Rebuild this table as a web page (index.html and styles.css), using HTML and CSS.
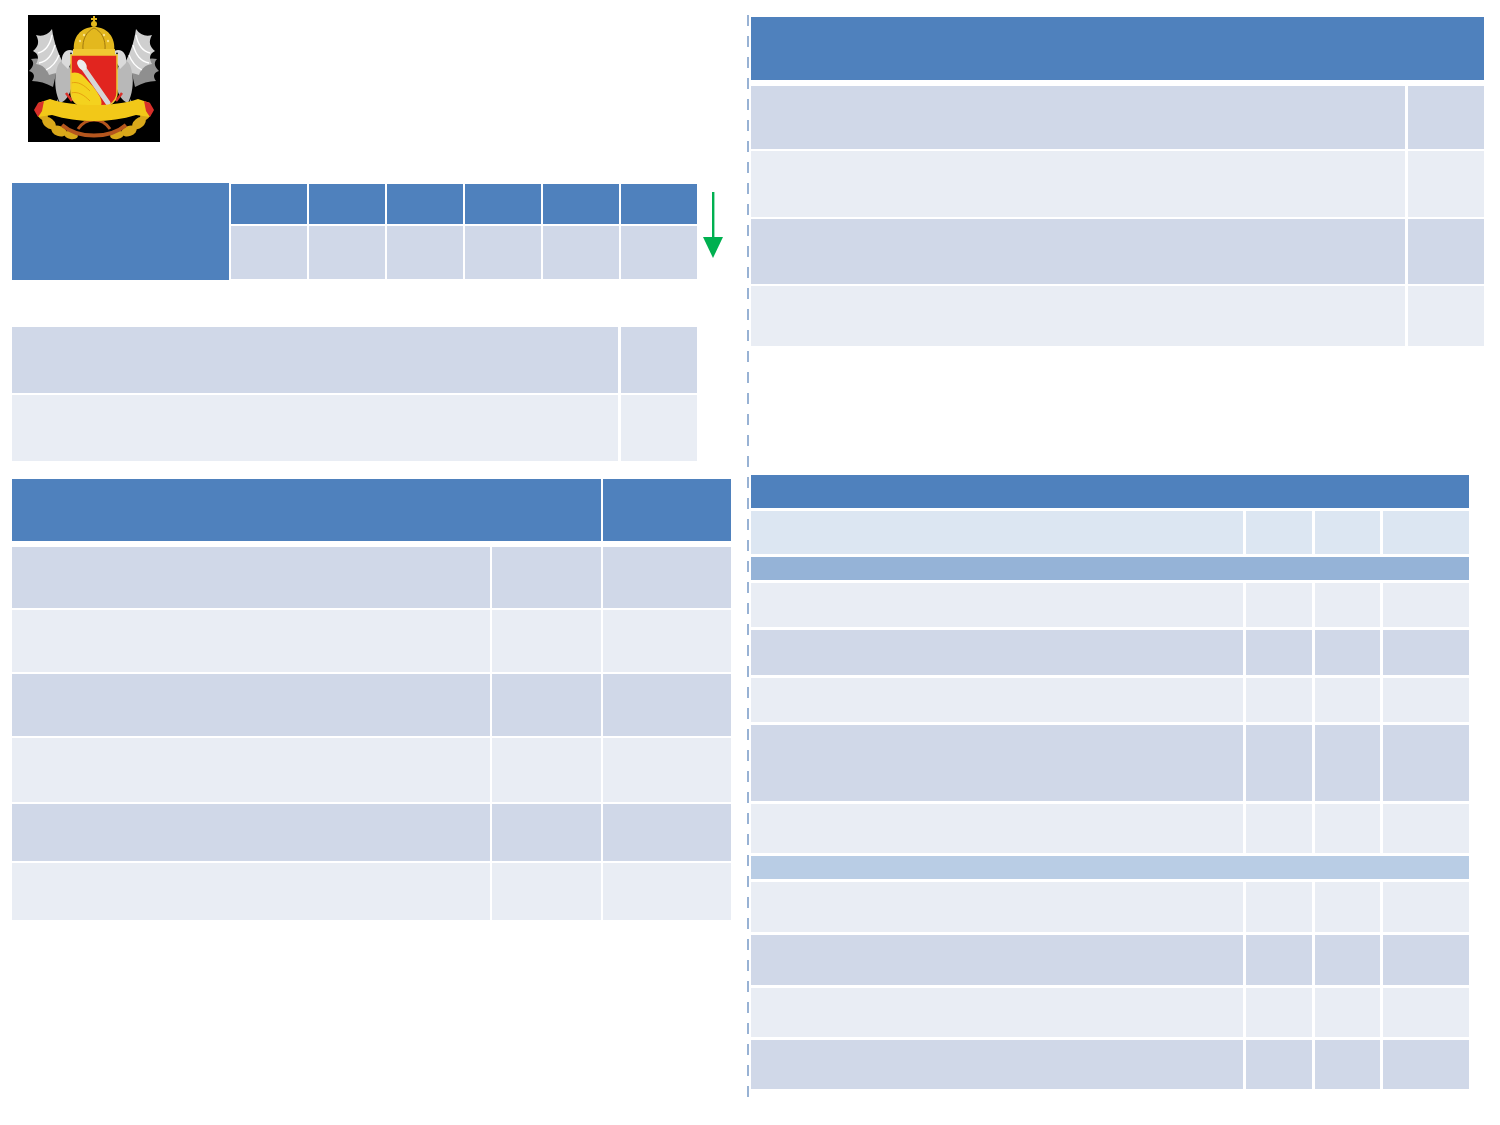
FILE: index.html
```html
<!DOCTYPE html>
<html lang="ru">
<head>
<meta charset="utf-8">
<title>Таблицы</title>
<link rel="stylesheet" href="styles.css">
</head>
<body>
<div class="page">
  <div class="left">
    <div class="emblem">
      <svg viewBox="0 0 132 127" width="132" height="127" aria-label="Герб">
        <rect x="0" y="0" width="132" height="127" fill="#000"/>
        <!-- wreath -->
        <g fill="#d9a81a">
          <ellipse cx="14" cy="98" rx="5" ry="8" transform="rotate(-30 14 98)"/>
          <ellipse cx="21" cy="108" rx="5" ry="8" transform="rotate(-50 21 108)"/>
          <ellipse cx="31" cy="116" rx="5" ry="8" transform="rotate(-70 31 116)"/>
          <ellipse cx="43" cy="120" rx="4" ry="7" transform="rotate(-80 43 120)"/>
          <ellipse cx="118" cy="98" rx="5" ry="8" transform="rotate(30 118 98)"/>
          <ellipse cx="111" cy="108" rx="5" ry="8" transform="rotate(50 111 108)"/>
          <ellipse cx="101" cy="116" rx="5" ry="8" transform="rotate(70 101 116)"/>
          <ellipse cx="89" cy="120" rx="4" ry="7" transform="rotate(80 89 120)"/>
        </g>
        <path d="M34 110 C50 124 82 124 98 110" fill="none" stroke="#b5561e" stroke-width="4"/>
        <path d="M50 114 C58 102 74 102 82 114" fill="none" stroke="#b5561e" stroke-width="3"/>
        <!-- left eagle -->
        <g id="eagle">
          <path d="M30 50 C22 46 12 42 3 44 C7 48 5 52 1 56 C7 58 7 62 4 66 C11 66 18 68 25 72 Z" fill="#8f8f8f"/>
          <path d="M36 50 C30 38 26 28 24 14 C20 20 14 22 8 20 C12 27 10 32 5 36 C11 39 11 44 8 49 C15 50 19 54 21 60 C27 58 32 57 36 58 Z" fill="#cfcfcf"/>
          <path d="M24 20 C22 30 18 36 10 38 M27 30 C24 40 20 46 11 48 M31 40 C28 48 24 52 18 55" fill="none" stroke="#ffffff" stroke-width="1.3"/>
          <path d="M34 46 C42 48 46 58 44 70 C42 80 38 86 32 88 C28 80 26 68 28 58 C29 51 31 47 34 46 Z" fill="#b8b8b8"/>
          <path d="M34 48 C33 41 36 35 42 35 C46 35 48 38 47 40 L51 41 L46 43 C44 46 42 50 40 54 Z" fill="#dadada"/>
          <circle cx="43" cy="38.5" r="1" fill="#222"/>
          <path d="M30 84 C26 90 22 94 17 97 L31 96 Z" fill="#9a9a9a"/>
          <path d="M38 78 L44 86" stroke="#d8302a" stroke-width="2.5"/>
        </g>
        <use href="#eagle" transform="translate(132 0) scale(-1 1)"/>
        <!-- crown -->
        <path d="M46 37 C44 22 53 12 66 12 C79 12 88 22 86 37 Z" fill="#e3b81e"/>
        <path d="M55 35 C54 24 59 16 66 13 C73 16 78 24 77 35" fill="none" stroke="#a27a10" stroke-width="1"/>
        <g fill="#f7e08a">
          <circle cx="52" cy="26" r="1.2"/><circle cx="56" cy="20" r="1.2"/><circle cx="80" cy="26" r="1.2"/><circle cx="76" cy="20" r="1.2"/>
        </g>
        <rect x="45" y="34" width="42" height="6" fill="#f0c832"/>
        <circle cx="66" cy="9" r="3" fill="#e3b81e"/>
        <rect x="65" y="1" width="2" height="6" fill="#e3b81e"/>
        <rect x="63" y="3" width="6" height="2" fill="#e3b81e"/>
        <!-- shield -->
        <path d="M43 40 H89 V78 C89 88 78 93 66 97 C54 93 43 88 43 78 Z" fill="#e1251f"/>
        <path d="M43 58 C50 56 55 60 58 64 C62 68 68 74 72 82 C74 86 74 90 72 93 C70 95 68 96 66 97 C54 93 43 88 43 78 Z" fill="#f4d21e"/>
        <path d="M43 68 C50 66 56 70 62 76 M43 78 C50 76 56 80 62 86" fill="none" stroke="#e8a010" stroke-width="1"/>
        <path d="M52 48 L80 88" stroke="#d6d6d6" stroke-width="5" stroke-linecap="round"/>
        <ellipse cx="54" cy="50" rx="6" ry="4" transform="rotate(55 54 50)" fill="#ececec"/>
        <path d="M43 40 H89 V78 C89 88 78 93 66 97 C54 93 43 88 43 78 Z" fill="none" stroke="#f0c832" stroke-width="1.5"/>
        <!-- ribbon -->
        <path d="M10 88 L22 84 C46 92 86 92 110 84 L122 88 L118 96 L122 102 L108 100 C82 108 50 108 24 100 L10 102 L14 96 Z" fill="#f2c818"/>
        <path d="M10 88 L16 86 L14 96 L10 102 L6 95 Z" fill="#d8302a"/>
        <path d="M122 88 L116 86 L118 96 L122 102 L126 95 Z" fill="#d8302a"/>
      </svg>
    </div>

    <div class="t1row">
      <div class="t1">
        <div class="c blue t1-corner"></div>
        <div class="c blue"></div><div class="c blue"></div><div class="c blue"></div>
        <div class="c blue"></div><div class="c blue"></div><div class="c blue"></div>
        <div class="c dark"></div><div class="c dark"></div><div class="c dark"></div>
        <div class="c dark"></div><div class="c dark"></div><div class="c dark"></div>
      </div>
      <svg class="arrow" viewBox="0 0 20 66" width="20" height="66" aria-hidden="true">
        <rect x="9" y="0" width="2.4" height="46" fill="#00b050"/>
        <path d="M0 45 L20 45 L10 66 Z" fill="#00b050"/>
      </svg>
    </div>

    <div class="t2">
      <div class="c dark"></div><div class="c dark"></div>
      <div class="c light"></div><div class="c light"></div>
    </div>

    <div class="t3-head">
      <div class="c blue"></div><div class="c blue"></div>
    </div>
    <div class="t3">
      <div class="c dark"></div><div class="c dark"></div><div class="c dark"></div>
      <div class="c light"></div><div class="c light"></div><div class="c light"></div>
      <div class="c dark"></div><div class="c dark"></div><div class="c dark"></div>
      <div class="c light"></div><div class="c light"></div><div class="c light"></div>
      <div class="c dark"></div><div class="c dark"></div><div class="c dark"></div>
      <div class="c light"></div><div class="c light"></div><div class="c light"></div>
    </div>
  </div>

  <div class="divider"></div>

  <div class="right">
    <div class="ta-head c blue"></div>
    <div class="ta">
      <div class="c dark"></div><div class="c dark"></div>
      <div class="c light"></div><div class="c light"></div>
      <div class="c dark"></div><div class="c dark"></div>
      <div class="c light"></div><div class="c light"></div>
    </div>

    <div class="tb">
      <div class="c blue span"></div>
      <div class="c pale"></div><div class="c pale"></div><div class="c pale"></div><div class="c pale"></div>
      <div class="c sec1 span"></div>
      <div class="c light"></div><div class="c light"></div><div class="c light"></div><div class="c light"></div>
      <div class="c dark"></div><div class="c dark"></div><div class="c dark"></div><div class="c dark"></div>
      <div class="c light"></div><div class="c light"></div><div class="c light"></div><div class="c light"></div>
      <div class="c dark"></div><div class="c dark"></div><div class="c dark"></div><div class="c dark"></div>
      <div class="c light"></div><div class="c light"></div><div class="c light"></div><div class="c light"></div>
      <div class="c sec2 span"></div>
      <div class="c light"></div><div class="c light"></div><div class="c light"></div><div class="c light"></div>
      <div class="c dark"></div><div class="c dark"></div><div class="c dark"></div><div class="c dark"></div>
      <div class="c light"></div><div class="c light"></div><div class="c light"></div><div class="c light"></div>
      <div class="c dark"></div><div class="c dark"></div><div class="c dark"></div><div class="c dark"></div>
    </div>
  </div>
</div>
</body>
</html>
```

FILE: styles.css
```css
html, body {
  margin: 0;
  padding: 0;
  background: #ffffff;
  font-family: "Liberation Sans", Arial, sans-serif;
}

.page {
  display: flex;
  align-items: flex-start;
  width: 1500px;
  height: 1125px;
  overflow: hidden;
}

.c { min-width: 0; }
.blue { background: #4f81bd; }
.dark { background: #d0d8e8; }
.light { background: #e9edf4; }
.pale { background: #dce6f2; }
.sec1 { background: #95b3d7; }
.sec2 { background: #b9cde5; }

/* left column */
.left {
  width: 735px;
  padding-left: 12px;
  flex: none;
}

.emblem {
  margin: 15px 0 0 16px;
  width: 132px;
  height: 127px;
}
.emblem svg { display: block; }

.t1row {
  display: flex;
  align-items: flex-start;
  margin-top: 42px;
}

.t1 {
  display: grid;
  grid-template-columns: 217px repeat(6, 76px);
  grid-template-rows: 40px 53px;
  gap: 2px;
}
.t1-corner {
  grid-row: 1 / 3;
  margin: -1px 0;
}

.arrow {
  display: block;
  margin: 8px 0 0 6px;
}

.t2 {
  display: grid;
  grid-template-columns: 606px 76px;
  grid-template-rows: 66px 66px;
  column-gap: 3px;
  row-gap: 2px;
  margin-top: 48px;
}

.t3-head {
  display: grid;
  grid-template-columns: 589px 128px;
  grid-template-rows: 62px;
  column-gap: 2px;
  margin-top: 18px;
}

.t3 {
  display: grid;
  grid-template-columns: 478px 109px 128px;
  grid-template-rows: 61px 62px 62px 64px 57px 57px;
  gap: 2px;
  margin-top: 6px;
}

/* divider */
.divider {
  flex: none;
  width: 2px;
  height: 1085px;
  margin-top: 15px;
  background: repeating-linear-gradient(to bottom, #98b2d4 0 11px, transparent 11px 21px);
}

/* right column */
.right {
  flex: none;
  padding-left: 2px;
  padding-top: 17px;
}

.ta-head {
  width: 733px;
  height: 63px;
}

.ta {
  display: grid;
  grid-template-columns: 654px 76px;
  grid-template-rows: 63px 66px 65px 60px;
  column-gap: 3px;
  row-gap: 2px;
  margin-top: 6px;
}

.tb {
  display: grid;
  grid-template-columns: 492px 66px 65px 86px;
  grid-template-rows: 33px 43px 23px 44px 45px 44px 76px 49px 23px 50px 50px 49px 49px;
  gap: 3px;
  margin-top: 129px;
}
.span { grid-column: 1 / -1; }
```
